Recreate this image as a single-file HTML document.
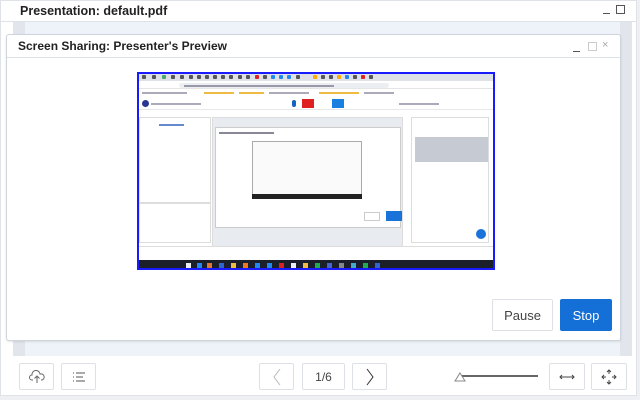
<!DOCTYPE html>
<html><head><style>
*{box-sizing:border-box;margin:0;padding:0}
body{width:640px;height:400px;background:#eef0f3;font-family:"Liberation Sans",sans-serif;position:relative;overflow:hidden}
.a{position:absolute}
.btn{position:absolute;border:1px solid #dde1e6;background:#fff;border-radius:2px;display:flex;align-items:center;justify-content:center;color:#333}
.t{position:absolute;top:1px;width:4px;height:4px;background:#555;border-radius:1px}
.k{position:absolute;top:189px;width:5px;height:5px}
.x{position:absolute;height:2px;background:#aab}
</style></head><body>
<div class="a" style="left:0;top:0;width:637px;height:396px;background:#fff;border:1px solid #dfe3e8"></div>
<div class="a" style="left:20px;top:4px;font-size:12.5px;font-weight:bold;color:#222">Presentation: default.pdf</div>
<div class="a" style="left:603px;top:13px;width:7px;height:1px;background:#555"></div>
<div class="a" style="left:616px;top:5px;width:9px;height:9px;border:1px solid #555"></div>
<div class="a" style="left:0;top:21px;width:637px;height:1px;background:#dde2e8"></div>
<div class="a" style="left:13px;top:22px;width:619px;height:334px;background:#eef3fa"></div>
<div class="a" style="left:13px;top:22px;width:12px;height:334px;background:#e2e6ec"></div>
<div class="a" style="left:620px;top:22px;width:12px;height:334px;background:#e2e6ec"></div>
<div class="a" style="left:6px;top:34px;width:615px;height:307px;background:#fff;border:1px solid #cfd5dc;border-radius:3px;box-shadow:0 1px 2px rgba(0,0,0,.1)"></div>
<div class="a" style="left:18px;top:39px;font-size:12px;font-weight:bold;color:#222">Screen Sharing: Presenter's Preview</div>
<div class="a" style="left:573px;top:51px;width:7px;height:1px;background:#555"></div>
<div class="a" style="left:588px;top:42px;width:9px;height:9px;border:1px solid #ccc"></div>
<div class="a" style="left:602px;top:39px;font-size:11px;color:#aaa">×</div>
<div class="a" style="left:7px;top:57px;width:613px;height:1px;background:#dde2e8"></div>
<div class="a" style="left:137px;top:72px;width:358px;height:198px;background:#fff;border:2px solid #1a1aff;overflow:hidden">
 <div class="a" style="left:0;top:0;width:356px;height:7px;background:#dee1e6"></div>
 <div class="t" style="left:3px"></div><div class="t" style="left:13px"></div><div class="t" style="left:23px;background:#4a6"></div><div class="t" style="left:32px"></div><div class="t" style="left:41px"></div><div class="t" style="left:50px"></div><div class="t" style="left:58px"></div><div class="t" style="left:66px"></div><div class="t" style="left:74px"></div><div class="t" style="left:82px"></div><div class="t" style="left:90px"></div><div class="t" style="left:99px"></div><div class="t" style="left:107px"></div><div class="t" style="left:116px;background:#d22"></div><div class="t" style="left:124px"></div><div class="t" style="left:132px;background:#28e"></div><div class="t" style="left:140px;background:#28e"></div><div class="t" style="left:148px;background:#28e"></div><div class="t" style="left:157px"></div><div class="t" style="left:174px;background:#fa0"></div><div class="t" style="left:182px"></div><div class="t" style="left:190px"></div><div class="t" style="left:198px;background:#fa0"></div><div class="t" style="left:206px;background:#28e"></div><div class="t" style="left:214px"></div><div class="t" style="left:222px;background:#d22"></div><div class="t" style="left:230px"></div>
 <div class="a" style="left:0;top:7px;width:356px;height:8px;background:#fff;border-bottom:1px solid #e5e5e5"></div>
 <div class="a" style="left:40px;top:9px;width:210px;height:5px;background:#eceff2;border-radius:3px"></div>
 <div class="x" style="left:45px;top:11px;width:150px;background:#99a"></div>
 <div class="x" style="left:3px;top:18px;width:45px"></div><div class="x" style="left:65px;top:18px;width:30px;background:#eb4"></div><div class="x" style="left:100px;top:18px;width:25px;background:#eb4"></div><div class="x" style="left:130px;top:18px;width:40px"></div><div class="x" style="left:180px;top:18px;width:40px;background:#eb4"></div><div class="x" style="left:225px;top:18px;width:30px"></div>
 <div class="a" style="left:0;top:22px;width:356px;height:14px;background:#fff;border-bottom:1px solid #e8e8e8"></div>
 <div class="a" style="left:3px;top:26px;width:7px;height:7px;border-radius:50%;background:#283593"></div>
 <div class="x" style="left:12px;top:29px;width:50px"></div>
 <div class="a" style="left:153px;top:26px;width:4px;height:7px;background:#1565c0;border-radius:2px"></div>
 <div class="a" style="left:163px;top:25px;width:12px;height:9px;background:#e02020"></div>
 <div class="a" style="left:193px;top:25px;width:12px;height:9px;background:#1a80e0"></div>
 <div class="x" style="left:260px;top:29px;width:40px"></div>
 <div class="a" style="left:0;top:43px;width:72px;height:86px;border:1px solid #ddd"></div>
 <div class="x" style="left:20px;top:50px;width:25px;background:#68c"></div>
 <div class="a" style="left:0;top:129px;width:72px;height:40px;border:1px solid #ddd"></div>
 <div class="a" style="left:73px;top:43px;width:191px;height:130px;background:#e8ecf0;border:1px solid #ddd"></div>
 <div class="a" style="left:76px;top:53px;width:186px;height:101px;background:#fff;border:1px solid #ccc"></div>
 <div class="x" style="left:80px;top:58px;width:55px;background:#889"></div>
 <div class="a" style="left:113px;top:67px;width:110px;height:58px;background:#fafafa;border:1px solid #aaa"></div>
 <div class="a" style="left:113px;top:120px;width:110px;height:5px;background:#222"></div>
 <div class="a" style="left:225px;top:138px;width:16px;height:9px;border:1px solid #ccc"></div>
 <div class="a" style="left:247px;top:137px;width:16px;height:10px;background:#1a73d9"></div>
 <div class="a" style="left:272px;top:43px;width:78px;height:126px;border:1px solid #ddd"></div>
 <div class="a" style="left:276px;top:63px;width:73px;height:25px;background:#c5cad3"></div>
 <div class="a" style="left:337px;top:155px;width:10px;height:10px;border-radius:50%;background:#1a73d9"></div>
 <div class="a" style="left:0;top:172px;width:356px;height:14px;background:#fff;border-top:1px solid #ddd"></div>
 <div class="a" style="left:0;top:186px;width:356px;height:12px;background:#1a1f2a"></div>
 <div class="k" style="left:47px;background:#eee"></div><div class="k" style="left:58px;background:#28e"></div><div class="k" style="left:68px;background:#d73"></div><div class="k" style="left:80px;background:#36c"></div><div class="k" style="left:92px;background:#eb4"></div><div class="k" style="left:104px;background:#e72"></div><div class="k" style="left:116px;background:#28e"></div><div class="k" style="left:128px;background:#28e"></div><div class="k" style="left:140px;background:#d22"></div><div class="k" style="left:152px;background:#eee"></div><div class="k" style="left:164px;background:#eb4"></div><div class="k" style="left:176px;background:#2a5"></div><div class="k" style="left:188px;background:#46c"></div><div class="k" style="left:200px;background:#888"></div><div class="k" style="left:212px;background:#4ac"></div><div class="k" style="left:224px;background:#2a5"></div><div class="k" style="left:236px;background:#36c"></div>
</div>
<div class="btn" style="left:492px;top:299px;width:61px;height:32px;font-size:13px;color:#444">Pause</div>
<div class="btn" style="left:560px;top:299px;width:52px;height:32px;font-size:13px;color:#fff;background:#1470d6;border-color:#1470d6">Stop</div>
<div class="btn" style="left:19px;top:363px;width:35px;height:27px"><svg width="16" height="14" viewBox="0 0 16 14" fill="none" stroke="#666" stroke-width="1"><path d="M4 10H3a2.5 2.5 0 0 1 0-5 4 4 0 0 1 8-1 3 3 0 0 1 2 6h-1"/><path d="M8 13V6M5.5 8.5L8 6l2.5 2.5"/></svg></div>
<div class="btn" style="left:61px;top:363px;width:35px;height:27px"><svg width="14" height="10" stroke="#555" stroke-width="1"><path d="M1 1h1M4 1h9M1 5h1M4 5h7M1 9h1M4 9h9"/></svg></div>
<div class="btn" style="left:259px;top:363px;width:35px;height:27px"><svg width="10" height="18" fill="none" stroke="#bbb"><path d="M8 1L2 9l6 8"/></svg></div>
<div class="btn" style="left:302px;top:363px;width:43px;height:27px;font-size:12px;color:#444">1/6</div>
<div class="btn" style="left:352px;top:363px;width:35px;height:27px"><svg width="10" height="18" fill="none" stroke="#333"><path d="M2 1l6 8-6 8"/></svg></div>
<div class="a" style="left:460px;top:375px;width:78px;height:2px;background:#666"></div>
<svg class="a" style="left:454px;top:372px" width="12" height="10"><path d="M6 1L11 9H1z" fill="#fff" stroke="#888"/></svg>
<div class="btn" style="left:549px;top:363px;width:36px;height:27px"><svg width="16" height="8" fill="none" stroke="#444"><path d="M1 4h14M3 2L1 4l2 2M13 2l2 2-2 2"/></svg></div>
<div class="btn" style="left:591px;top:363px;width:36px;height:27px"><svg width="16" height="16" fill="none" stroke="#444"><path d="M8 1v4M8 11v4M1 8h4M11 8h4M6 3l2-2 2 2M6 13l2 2 2-2M3 6L1 8l2 2M13 6l2 2-2 2"/></svg></div>
</body></html>
